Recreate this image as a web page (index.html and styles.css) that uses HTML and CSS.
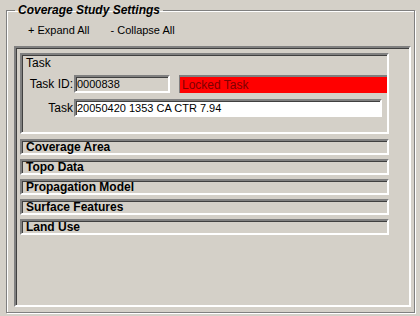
FILE: index.html
```html
<!DOCTYPE html>
<html lang="en">
<head>
    <meta charset="UTF-8">
    <title>Coverage Study Settings</title>
    <link rel="stylesheet" href="styles.css">
</head>
<body>
    <fieldset class="settings">
        <legend>Coverage Study Settings</legend>

        <!-- expand / collapse links -->
        <div class="toolbar">
            <span class="tool">+ Expand All</span>
            <span class="tool">- Collapse All</span>
        </div>

        <div class="panel">
            <!-- Task section, open -->
            <div class="box task">
                <div class="caption">Task</div>
                <div class="row">
                    <label class="lbl">Task ID:</label>
                    <input class="field id" type="text" value="0000838" disabled>
                    <div class="locked">Locked Task</div>
                </div>
                <div class="row">
                    <label class="lbl">Task</label>
                    <input class="field name" type="text" value="20050420 1353 CA CTR 7.94">
                </div>
            </div>

            <!-- closed sections -->
            <div class="box section">Coverage Area</div>
            <div class="box section">Topo Data</div>
            <div class="box section">Propagation Model</div>
            <div class="box section">Surface Features</div>
            <div class="box section">Land Use</div>
        </div>
    </fieldset>
</body>
</html>
```

FILE: styles.css
```css
body {
    margin: 0;
    background-color: #d4d0c8;
    font-family: "Liberation Sans", Arial, sans-serif;
    font-size: 12px;
    color: #000;
}
.settings {
    margin: 4px 5px 3px 6px;
    padding: 0 3px 5px 7px;
    height: 309px;
    box-sizing: border-box;
    border: 1px solid #808080;
    box-shadow: 1px 1px 0 #fff, inset 1px 1px 0 #fff;
    display: flex;
    flex-direction: column;
}
.settings legend {
    margin-left: 1px;
    padding: 0 3px;
    font-size: 12px;
    font-weight: bold;
    font-style: italic;
    line-height: 12px;
    color: #000;
}
.toolbar {
    display: flex;
    gap: 21px;
    padding: 8px 0 0 14px;
    height: 30px;
    box-sizing: border-box;
    font-size: 11px;
}
.panel {
    flex: 1;
    border-style: solid;
    border-width: 2px;
    border-color: #808080 #fff #fff #808080;
    box-shadow: inset 1px 1px 0 #404040;
    padding: 5px 20px 0 4px;
    display: flex;
    flex-direction: column;
    gap: 4px;
}
.box {
    border-style: solid;
    border-width: 2px;
    border-color: #808080 #fff #fff #808080;
    box-shadow: inset 1px 1px 0 #404040;
}
.task {
    height: 81px;
    box-sizing: border-box;
    padding: 1px 0 0 4px;
    margin-bottom: 1px;
}
.caption {
    line-height: 14px;
    margin-bottom: 5px;
}
.row {
    display: flex;
    align-items: center;
    margin-bottom: 6px;
}
.lbl {
    width: 47px;
    padding-right: 1px;
    text-align: right;
}
.field {
    font-family: "Liberation Sans", Arial, sans-serif;
    font-size: 11px;
    height: 18px;
    box-sizing: border-box;
    padding: 0 1px;
    border-style: solid;
    border-width: 2px;
    border-color: #808080 #fff #fff #808080;
    box-shadow: inset 1px 1px 0 #404040;
    color: #000;
    outline: none;
}
.field.id {
    width: 96px;
    background-color: #d4d0c8;
}
.field.name {
    width: 308px;
    background-color: #fff;
}
.locked {
    margin-left: 9px;
    flex: 1;
    height: 18px;
    box-sizing: border-box;
    padding: 1px 0 0 2px;
    background-color: #ff0000;
    color: #800000;
    border-top: 2px solid #808080;
    border-left: 1px solid #808080;
    line-height: 14px;
}
.section {
    height: 16px;
    box-sizing: border-box;
    padding-left: 4px;
    font-weight: bold;
    line-height: 13px;
}
```
